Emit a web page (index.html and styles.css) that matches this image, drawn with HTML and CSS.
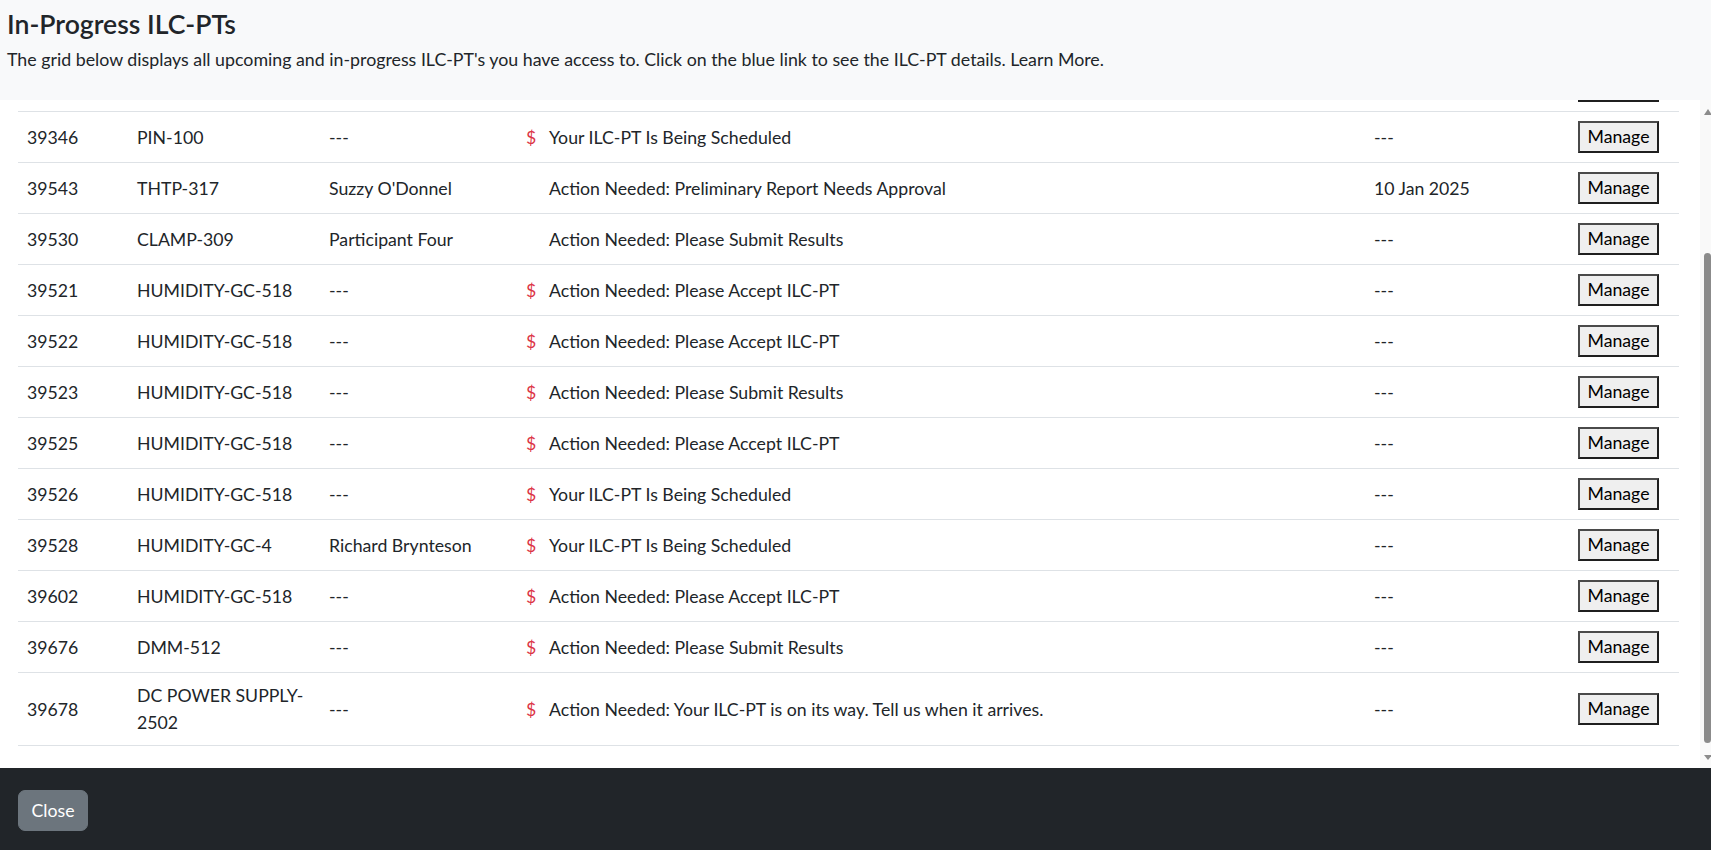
FILE: index.html
```html
<!DOCTYPE html>
<html lang="en">

<head>
    <meta charset="UTF-8">
    <meta name="viewport" content="width=device-width, initial-scale=1.0">
    <title>In-Progress ILC-PTs</title>
    <link rel="stylesheet" href="styles.css">
</head>

<body>
    <div class="modalBox">
        <div class="modalHead">
            <h4>In-Progress ILC-PTs</h4>
            <p>The grid below displays all upcoming and in-progress ILC-PT's you have access to. Click on the blue link to see the ILC-PT details. Learn More.</p>
        </div>
        <div class="gridRow">
            <div class="gridWrap">
                <table class="grid">
                    <colgroup>
                        <col class="cId">
                        <col class="cArt">
                        <col class="cPart">
                        <col class="cStatus">
                        <col class="cDate">
                        <col class="cAct">
                    </colgroup>
                    <tbody>
                        <!-- tail of the row scrolled out of view -->
                        <tr class="prevRow">
                            <td></td>
                            <td></td>
                            <td></td>
                            <td></td>
                            <td></td>
                            <td><span class="btnTail"></span></td>
                        </tr>
                        <tr>
                            <td>39346</td>
                            <td>PIN-100</td>
                            <td>---</td>
                            <td><span class="dollar">$</span>Your ILC-PT Is Being Scheduled</td>
                            <td>---</td>
                            <td><button class="manage">Manage</button></td>
                        </tr>
                        <tr>
                            <td>39543</td>
                            <td>THTP-317</td>
                            <td>Suzzy O'Donnel</td>
                            <td><span class="dollar"></span>Action Needed: Preliminary Report Needs Approval</td>
                            <td>10 Jan 2025</td>
                            <td><button class="manage">Manage</button></td>
                        </tr>
                        <tr>
                            <td>39530</td>
                            <td>CLAMP-309</td>
                            <td>Participant Four</td>
                            <td><span class="dollar"></span>Action Needed: Please Submit Results</td>
                            <td>---</td>
                            <td><button class="manage">Manage</button></td>
                        </tr>
                        <tr>
                            <td>39521</td>
                            <td>HUMIDITY-GC-518</td>
                            <td>---</td>
                            <td><span class="dollar">$</span>Action Needed: Please Accept ILC-PT</td>
                            <td>---</td>
                            <td><button class="manage">Manage</button></td>
                        </tr>
                        <tr>
                            <td>39522</td>
                            <td>HUMIDITY-GC-518</td>
                            <td>---</td>
                            <td><span class="dollar">$</span>Action Needed: Please Accept ILC-PT</td>
                            <td>---</td>
                            <td><button class="manage">Manage</button></td>
                        </tr>
                        <tr>
                            <td>39523</td>
                            <td>HUMIDITY-GC-518</td>
                            <td>---</td>
                            <td><span class="dollar">$</span>Action Needed: Please Submit Results</td>
                            <td>---</td>
                            <td><button class="manage">Manage</button></td>
                        </tr>
                        <tr>
                            <td>39525</td>
                            <td>HUMIDITY-GC-518</td>
                            <td>---</td>
                            <td><span class="dollar">$</span>Action Needed: Please Accept ILC-PT</td>
                            <td>---</td>
                            <td><button class="manage">Manage</button></td>
                        </tr>
                        <tr>
                            <td>39526</td>
                            <td>HUMIDITY-GC-518</td>
                            <td>---</td>
                            <td><span class="dollar">$</span>Your ILC-PT Is Being Scheduled</td>
                            <td>---</td>
                            <td><button class="manage">Manage</button></td>
                        </tr>
                        <tr>
                            <td>39528</td>
                            <td>HUMIDITY-GC-4</td>
                            <td>Richard Brynteson</td>
                            <td><span class="dollar">$</span>Your ILC-PT Is Being Scheduled</td>
                            <td>---</td>
                            <td><button class="manage">Manage</button></td>
                        </tr>
                        <tr>
                            <td>39602</td>
                            <td>HUMIDITY-GC-518</td>
                            <td>---</td>
                            <td><span class="dollar">$</span>Action Needed: Please Accept ILC-PT</td>
                            <td>---</td>
                            <td><button class="manage">Manage</button></td>
                        </tr>
                        <tr>
                            <td>39676</td>
                            <td>DMM-512</td>
                            <td>---</td>
                            <td><span class="dollar">$</span>Action Needed: Please Submit Results</td>
                            <td>---</td>
                            <td><button class="manage">Manage</button></td>
                        </tr>
                        <tr>
                            <td>39678</td>
                            <td>DC POWER SUPPLY-2502</td>
                            <td>---</td>
                            <td><span class="dollar">$</span>Action Needed: Your ILC-PT is on its way. Tell us when it arrives.</td>
                            <td>---</td>
                            <td><button class="manage">Manage</button></td>
                        </tr>
                    </tbody>
                </table>
            </div>
            <div class="scrollBar">
                <span class="sbUp"></span>
                <span class="sbThumb"></span>
                <span class="sbDown"></span>
            </div>
        </div>
        <div class="modalFoot">
            <button id="close">Close</button>
        </div>
    </div>
</body>

</html>
```
FILE: styles.css
```css
* {
    margin: 0;
    padding: 0;
    box-sizing: border-box;
}

body {
    font-family: 'Lato', 'Open Sans', sans-serif;
    font-size: 17.7px;
    line-height: 27px;
    color: #212529;
    background: #fff;
}

.modalBox {
    height: 100vh;
    display: flex;
    flex-direction: column;
}

.modalHead {
    height: 100px;
    flex: none;
    background: #f8f9fa;
    padding: 8px 7px 0;
}

.modalHead h4 {
    font-size: 26.6px;
    font-weight: 600;
    line-height: 32px;
}

.modalHead p {
    margin-top: 6px;
    font-size: 17.8px;
}

.gridRow {
    flex: 1;
    min-height: 0;
    display: flex;
}

.gridWrap {
    flex: 1;
    overflow: hidden;
    padding-left: 18px;
}

.grid {
    width: 1661px;
    table-layout: fixed;
    border-collapse: collapse;
}

.cId {
    width: 110px;
}

.cArt {
    width: 192px;
}

.cPart {
    width: 197px;
}

.cStatus {
    width: 848px;
}

.cDate {
    width: 204px;
}

.cAct {
    width: 110px;
}

.grid td {
    padding: 9px;
    vertical-align: middle;
    border-bottom: 1px solid #dee2e6;
}

.grid .prevRow td {
    padding: 0 9px 9px;
    vertical-align: top;
}

.btnTail {
    display: block;
    width: 81px;
    height: 2px;
    background: #1f1f1f;
}

.dollar {
    display: inline-block;
    width: 23px;
    color: #dc3545;
}

.manage {
    display: block;
    font-family: inherit;
    font-size: inherit;
    line-height: 26px;
    color: #000;
    background: #efefef;
    padding: 1px 7.5px;
    border: 2px solid #1f1f1f;
    border-top-color: #4a4a4a;
    border-left-color: #4a4a4a;
    cursor: pointer;
}

.scrollBar {
    width: 11px;
    flex: none;
    background: #f9f9f9;
    padding-left: 4px;
    display: flex;
    flex-direction: column;
}

.sbUp {
    width: 0;
    height: 0;
    margin-top: 9px;
    border-left: 4px solid transparent;
    border-right: 4px solid transparent;
    border-bottom: 6px solid #8b8b8b;
}

.sbThumb {
    width: 7px;
    height: 490px;
    margin-top: 138px;
    background: #8b8b8b;
    border-radius: 4px;
}

.sbDown {
    width: 0;
    height: 0;
    margin-top: 12px;
    border-left: 4px solid transparent;
    border-right: 4px solid transparent;
    border-top: 5px solid #8b8b8b;
}

.modalFoot {
    height: 82px;
    flex: none;
    background: #212529;
    padding: 22px 18px 0;
}

#close {
    font-family: inherit;
    font-size: inherit;
    line-height: 27px;
    color: #fff;
    background: #6c757d;
    border: 1px solid #6c757d;
    border-radius: 7px;
    padding: 6px 12.5px;
    cursor: pointer;
}
```
